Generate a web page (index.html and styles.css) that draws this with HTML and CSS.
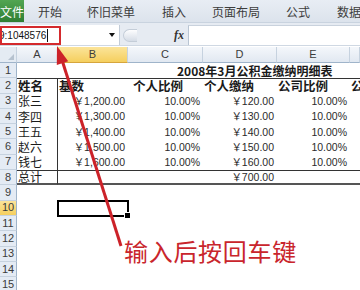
FILE: index.html
```html
<!DOCTYPE html>
<html lang="zh-CN">
  <head>
    <meta charset="UTF-8" />
    <meta name="viewport" content="width=device-width, initial-scale=1.0" />
    <title>公积金缴纳明细表</title>
    <link rel="stylesheet" href="styles.css">
  </head>
  <body>
    <div class="app">
      <!-- Ribbon tabs -->
      <div class="tabs">
        <div class="tab file">文件</div>
        <div class="tab t1">开始</div>
        <div class="tab t2">怀旧菜单</div>
        <div class="tab t3">插入</div>
        <div class="tab t4">页面布局</div>
        <div class="tab t5">公式</div>
        <div class="tab t6">数据</div>
      </div>

      <!-- Formula bar -->
      <div class="fbar">
        <div class="namebox">
          <span class="ref">9:1048576</span><span class="caret"></span>
          <span class="drop"></span>
        </div>
        <div class="fxzone">
          <span class="splitter"></span>
          <span class="fx">fx</span>
        </div>
        <div class="input"></div>
      </div>

      <!-- Sheet -->
      <div class="sheet">
        <div class="row head">
          <div class="corner"><span class="tri"></span></div>
          <div class="ch">A</div>
          <div class="ch sel">B</div>
          <div class="ch">C</div>
          <div class="ch">D</div>
          <div class="ch">E</div>
          <div class="ch"></div>
        </div>
        <div class="row">
          <div class="rh">1</div>
          <div class="c"></div>
          <div class="c title">2008年3月公积金缴纳明细表</div>
        </div>
        <div class="row r-top">
          <div class="rh">2</div>
          <div class="c a b-cell">姓名</div>
          <div class="c b-cell">基数</div>
          <div class="c b-cell ind">个人比例</div>
          <div class="c b-cell">个人缴纳</div>
          <div class="c b-cell">公司比例</div>
          <div class="c b-cell">公</div>
        </div>
        <div class="row">
          <div class="rh">3</div>
          <div class="c a name">张三</div>
          <div class="c n">￥1,200.00</div>
          <div class="c n">10.00%</div>
          <div class="c n">￥120.00</div>
          <div class="c n">10.00%</div>
          <div class="c"></div>
        </div>
        <div class="row">
          <div class="rh">4</div>
          <div class="c a name">李四</div>
          <div class="c n">￥1,300.00</div>
          <div class="c n">10.00%</div>
          <div class="c n">￥130.00</div>
          <div class="c n">10.00%</div>
          <div class="c"></div>
        </div>
        <div class="row">
          <div class="rh">5</div>
          <div class="c a name">王五</div>
          <div class="c n">￥1,400.00</div>
          <div class="c n">10.00%</div>
          <div class="c n">￥140.00</div>
          <div class="c n">10.00%</div>
          <div class="c"></div>
        </div>
        <div class="row">
          <div class="rh">6</div>
          <div class="c a name">赵六</div>
          <div class="c n">￥1,500.00</div>
          <div class="c n">10.00%</div>
          <div class="c n">￥150.00</div>
          <div class="c n">10.00%</div>
          <div class="c"></div>
        </div>
        <div class="row">
          <div class="rh">7</div>
          <div class="c a name">钱七</div>
          <div class="c n">￥1,600.00</div>
          <div class="c n">10.00%</div>
          <div class="c n">￥160.00</div>
          <div class="c n">10.00%</div>
          <div class="c"></div>
        </div>
        <div class="row r-total">
          <div class="rh">8</div>
          <div class="c a name">总计</div>
          <div class="c"></div>
          <div class="c"></div>
          <div class="c n">￥700.00</div>
          <div class="c"></div>
          <div class="c"></div>
        </div>
        <div class="row"><div class="rh">9</div></div>
        <div class="row">
          <div class="rh sel">10</div>
          <div class="c"></div>
          <div class="c active"></div>
        </div>
        <div class="row"><div class="rh">11</div></div>
        <div class="row"><div class="rh">12</div></div>
        <div class="row"><div class="rh">13</div></div>
        <div class="row"><div class="rh">14</div></div>
        <div class="row"><div class="rh">15</div></div>
      </div>

      <!-- Annotation drawn over the screenshot -->
      <svg class="marks" width="360" height="290" viewBox="0 0 360 290">
        <rect x="1" y="27" width="59" height="17" fill="none" stroke="#d42a2d" stroke-width="2" />
        <line x1="62" y1="60" x2="121" y2="246" stroke="#cc2229" stroke-width="3" />
        <polygon points="57,46 68.2,61.3 56.8,64.9" fill="#cc2229" />
      </svg>
      <div class="note">输入后按回车键</div>
    </div>
  </body>
</html>
```

FILE: styles.css
```css
/* Base */
* {
  box-sizing: border-box;
}
body {
  margin: 0;
  background: #fff;
  font-family: "Liberation Sans", "Noto Sans CJK SC", sans-serif;
  color: #222;
}
.app {
  position: relative;
  width: 360px;
  height: 290px;
  overflow: hidden;
}

/* Ribbon tabs */
.tabs {
  height: 23px;
  display: flex;
  align-items: stretch;
  background: linear-gradient(#e8edf4, #dce3ec);
  border-bottom: 1px solid #c9d3df;
  font-family: "Noto Sans CJK SC", sans-serif;
  font-size: 12px;
  color: #3c3c3c;
}
.tab {
  display: flex;
  align-items: center;
  white-space: nowrap;
}
.tab.file {
  width: 45px;
  justify-content: center;
  color: #fff;
  background: linear-gradient(#52a552, #2f7f33);
}
.t1 { margin-left: 14px; }
.t2 { margin-left: 25px; }
.t3 { margin-left: 27px; }
.t4 { margin-left: 26px; }
.t5 { margin-left: 26px; }
.t6 { margin-left: 27px; }

/* Formula bar */
.fbar {
  height: 23px;
  display: flex;
  background: #e6ebf2;
  border-bottom: 1px solid #cfd8e3;
  padding-top: 2px;
}
.namebox {
  width: 120px;
  background: #fff;
  display: flex;
  align-items: center;
  font-size: 10px;
  color: #111;
  border-right: 1px solid #c2ccd8;
}
.ref {
  margin-left: -1px;
}
.caret {
  width: 1px;
  height: 13px;
  background: #111;
  margin-left: 1px;
}
.drop {
  margin-left: auto;
  margin-right: 4px;
  width: 0;
  height: 0;
  border-left: 3px solid transparent;
  border-right: 3px solid transparent;
  border-top: 4px solid #111;
}
.fxzone {
  width: 68px;
  display: flex;
  align-items: center;
  padding-left: 3px;
}
.splitter {
  width: 14px;
  height: 13px;
  border-radius: 7px 0 0 7px;
  background: linear-gradient(#fdfdfe, #d5dce6);
  border: 1px solid #c4cdd8;
  border-right: none;
}
.fx {
  margin-left: auto;
  margin-right: 4px;
  font-family: "Liberation Serif", serif;
  font-style: italic;
  font-weight: bold;
  font-size: 12px;
  color: #333;
}
.input {
  flex: 1;
  background: #fff;
  border-left: 1px solid #b9c5d3;
  border-top: 1px solid #c9d2dd;
}

/* Sheet grid */
.sheet {
  margin-top: 1px;
}
.row {
  display: grid;
  grid-template-columns: 17px 41px 70px 75px 74px 73px 1fr;
  grid-template-rows: 100%;
  height: 15.3px;
  line-height: 1;
}
.row.head {
  height: 16px;
}
.corner,
.ch {
  background: linear-gradient(#f4f7fb, #e1e8f1);
  border-right: 1px solid #c6d2df;
  border-bottom: 1px solid #9fb4ca;
  font-size: 11px;
  color: #3b3b3b;
  display: flex;
  align-items: center;
  justify-content: center;
}
.corner {
  position: relative;
  background: #e4ebf3;
}
.tri {
  position: absolute;
  right: 2px;
  bottom: 2px;
  width: 0;
  height: 0;
  border-left: 6px solid transparent;
  border-bottom: 6px solid #b6c2cf;
}
.ch.sel {
  background: linear-gradient(#fbe49a, #f5cf5e);
  border-bottom-color: #d6a53c;
}
.rh {
  background: #e4ebf4;
  border-right: 1px solid #9fb4ca;
  border-bottom: 1px solid #c6d2df;
  font-size: 11px;
  color: #3b3b3b;
  display: flex;
  align-items: center;
  justify-content: center;
}
.rh.sel {
  background: linear-gradient(#fbe49a, #f5cf5e);
}

/* Cells */
.c {
  position: relative;
  display: flex;
  align-items: center;
  white-space: nowrap;
  font-family: "Noto Sans CJK SC", sans-serif;
  font-size: 12px;
  line-height: 1;
  color: #1a1a1a;
  padding: 0 1px;
  min-height: 0;
}
.c.title {
  grid-column: 3 / -1;
  padding-left: 119px;
  font-weight: bold;
  font-size: 12px;
}
.c.b-cell {
  font-weight: bold;
  font-size: 12.5px;
}
.c.ind {
  padding-left: 5px;
}
.c.n {
  justify-content: flex-end;
  padding-right: 3px;
  font-family: "Liberation Sans", "Noto Sans CJK SC", sans-serif;
  font-size: 10.5px;
  color: #2a2a2a;
}
.r-top .c {
  border-top: 1px solid #333;
}
.row .c.a {
  border-right: 1px solid #333;
}
.r-total .c {
  border-top: 1px solid #333;
  border-bottom: 2px solid #555;
}
.c.active {
  outline: 2px solid #000;
  outline-offset: -1px;
}
.c.active::after {
  content: "";
  position: absolute;
  right: -3px;
  bottom: -3px;
  width: 5px;
  height: 5px;
  background: #000;
  border: 1px solid #fff;
}

/* Annotation */
.marks {
  position: absolute;
  left: 0;
  top: 0;
  pointer-events: none;
}
.note {
  position: absolute;
  left: 124px;
  top: 239px;
  font-family: "Noto Sans CJK SC", sans-serif;
  font-size: 24px;
  line-height: 1;
  letter-spacing: 0.7px;
  color: #c9252c;
}
```
